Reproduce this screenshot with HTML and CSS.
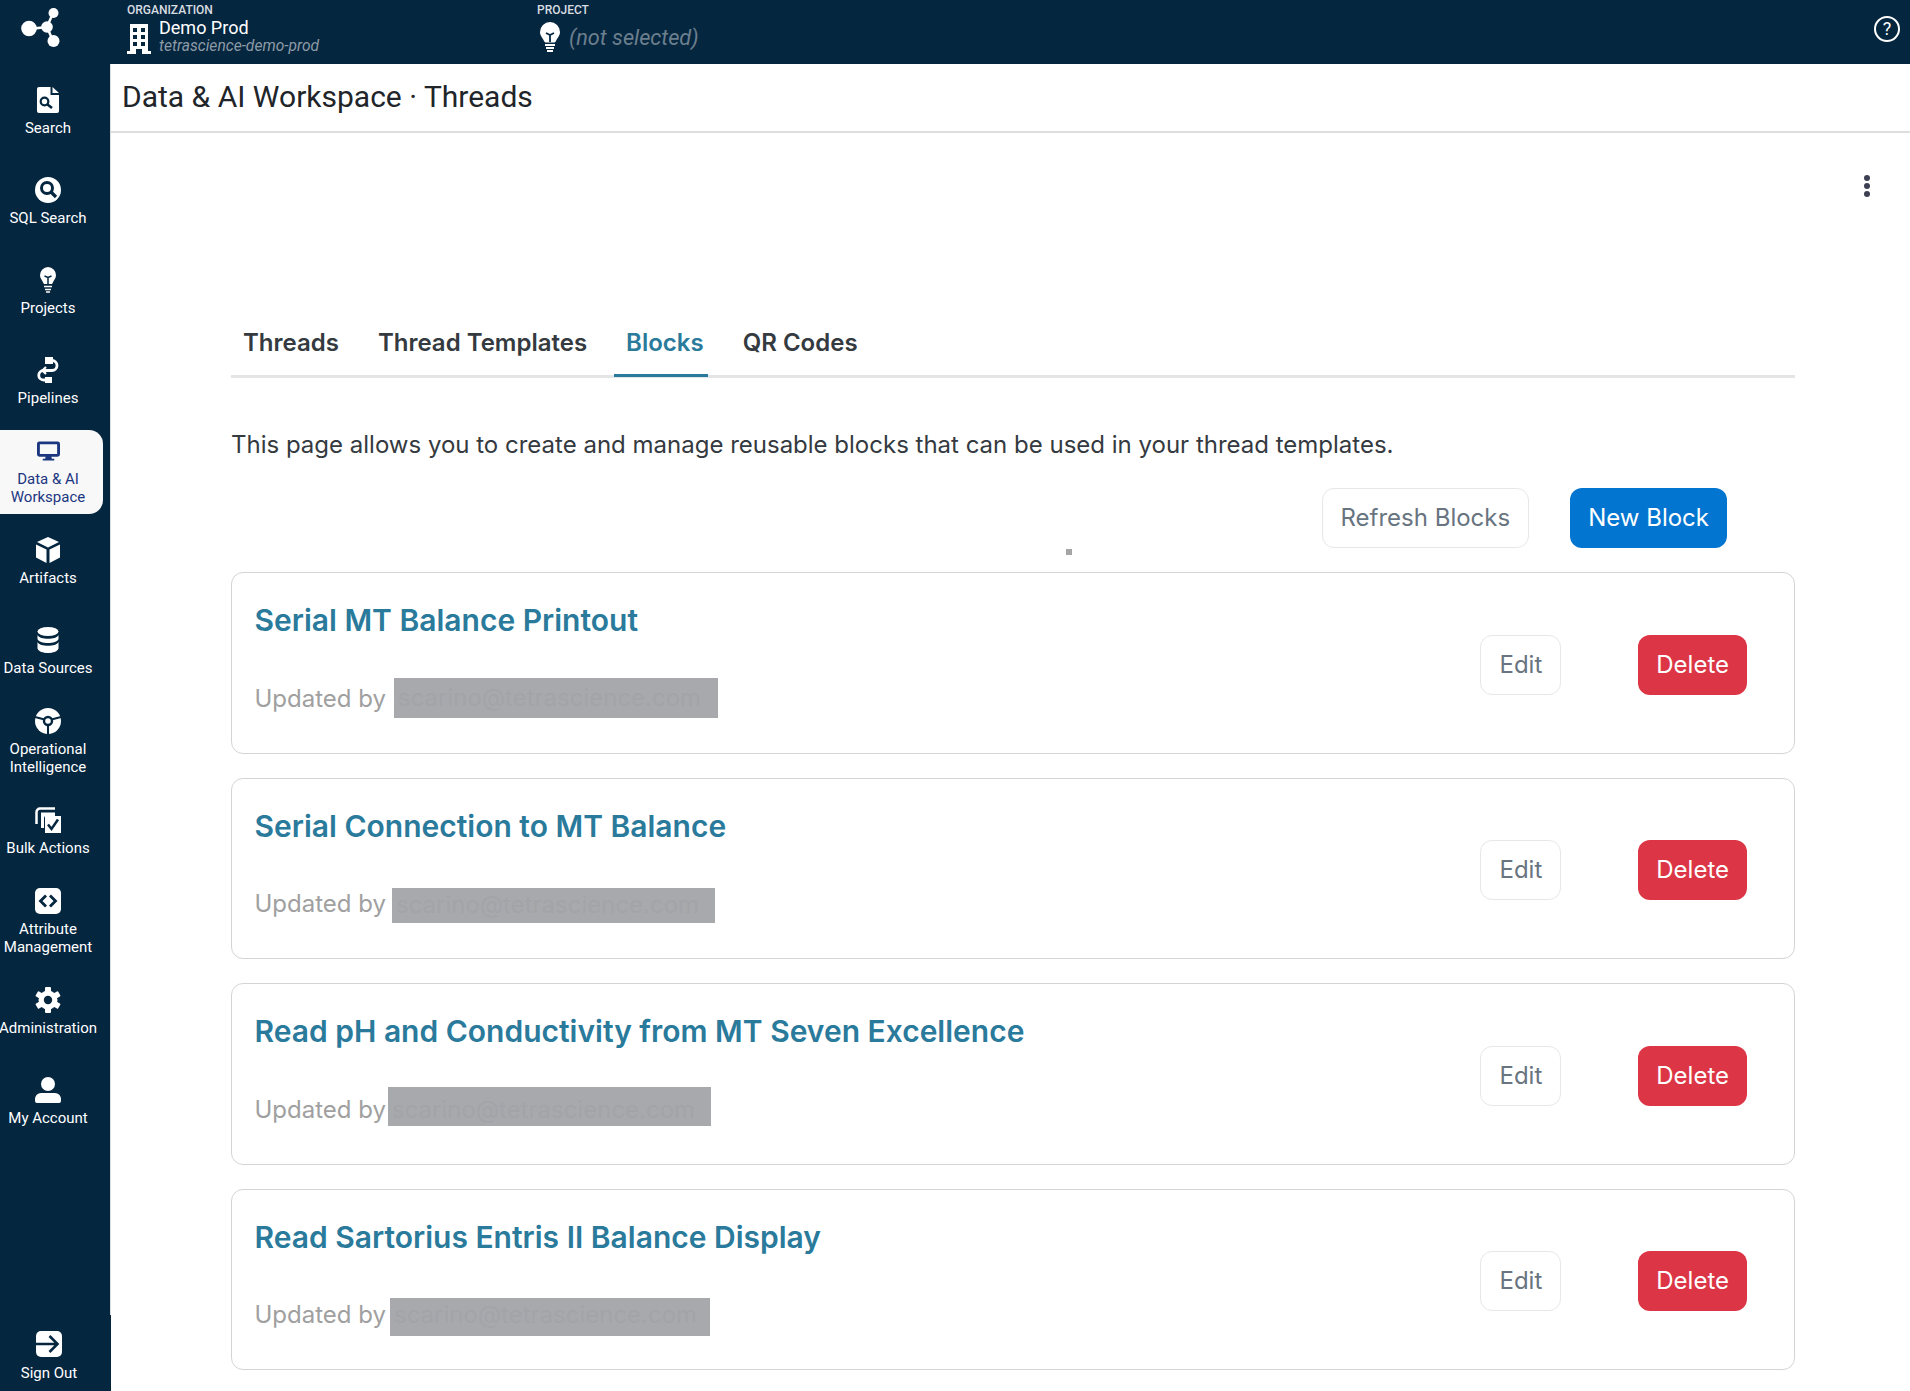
FILE: index.html
```html
<!DOCTYPE html>
<html lang="en">
<head>
<meta charset="utf-8">
<title>Data &amp; AI Workspace · Threads</title>
<link rel="stylesheet" href="styles.css">
</head>
<body>
<header class="topbar">
  <div class="logo-cell">
    <svg class="logo" viewBox="0 0 64 64"><g fill="#fff" stroke="#fff"><path d="M29 29 47 27 53 13M47 27 53 41" stroke-width="2.500" fill="none"/><circle cx="29" cy="28.500" r="7.800" stroke="none"/><circle cx="47" cy="27" r="5.800" stroke="none"/><circle cx="53.500" cy="13" r="5" stroke="none"/><circle cx="53.500" cy="41" r="6" stroke="none"/></g></svg>
  </div>
  <div class="org">
    <div class="mini-label">ORGANIZATION</div>
    <div class="org-row">
      <svg class="org-icon" viewBox="0 0 24 30"><path fill="#fff" fill-rule="evenodd" d="M3 0h18v27h3v3H15v-5H9v5H0v-3h3zM6 4v4h4V4zm8 0v4h4V4zM6 11v4h4v-4zm8 0v4h4v-4zM6 18v4h4v-4zm8 0v4h4v-4z"/></svg>
      <div>
        <div class="org-name">Demo Prod</div>
        <div class="org-slug">tetrascience-demo-prod</div>
      </div>
    </div>
  </div>
  <div class="project">
    <div class="mini-label">PROJECT</div>
    <div class="project-row">
      <svg class="project-icon" viewBox="0 0 20 30"><path fill="#fff" d="M10 0a10 10 0 0 1 10 10c0 4-3 6-4 9-.3.8-1 1.500-2 1.500H6c-1 0-1.700-.7-2-1.500-1-3-4-5-4-9A10 10 0 0 1 10 0z"/><path d="M6 11l4 2 4-2M10 13v7" stroke="#05263f" stroke-width="1.800" fill="none"/><path d="M5 23h10M6 26h8M7 29h6" stroke="#fff" stroke-width="1.800"/></svg>
      <span class="not-selected">(not selected)</span>
    </div>
  </div>
  <div class="help">?</div>
</header>

<div class="shell">
  <nav class="sidebar">
    <a class="nav-item">
      <svg class="nav-icon" viewBox="0 0 26 26"><path fill="#fff" d="M4 0h11.500v8H24v16a2 2 0 0 1-2 2H4a2 2 0 0 1-2-2V2a2 2 0 0 1 2-2zM17.500 0L24 6h-6.500z"/><circle cx="9.500" cy="14.500" r="3.800" fill="none" stroke="#05263f" stroke-width="2.200"/><path d="M12.500 17.500l4.500 3.500" stroke="#05263f" stroke-width="2.600"/></svg>
      <span>Search</span>
    </a>
    <a class="nav-item">
      <svg class="nav-icon" viewBox="0 0 26 26"><circle cx="13" cy="13" r="13" fill="#fff"/><circle cx="12" cy="11" r="5.500" fill="none" stroke="#05263f" stroke-width="3"/><path d="M16 15l5 5" stroke="#05263f" stroke-width="3.200"/></svg>
      <span>SQL Search</span>
    </a>
    <a class="nav-item">
      <svg class="nav-icon" viewBox="0 0 26 26"><path fill="#fff" d="M13 0a8.200 8.200 0 0 1 8 8.200c0 3.300-2.400 5-3.200 7.500-.3.700-.8 1.300-1.600 1.300H9.800c-.8 0-1.300-.6-1.600-1.300C7.400 13.200 5 11.500 5 8.200A8.200 8.200 0 0 1 13 0z"/><path d="M9.500 9l3.500 1.500L16.500 9M13 10.500V17" stroke="#05263f" stroke-width="1.500" fill="none"/><path d="M9 19.500h8M10 22.500h6M11 25h4" stroke="#fff" stroke-width="1.600"/></svg>
      <span>Projects</span>
    </a>
    <a class="nav-item">
      <svg class="nav-icon" viewBox="0 0 26 26"><path fill="#fff" d="M10 0h8v7h-8zM10 20h7v6h-7z"/><path d="M16 3.500h1a5 5 0 0 1 0 10H8.500a4.700 4.700 0 0 0 0 9.500H12" fill="none" stroke="#fff" stroke-width="2.800"/><path d="M11 10l-3.500 3.500L11 17" fill="none" stroke="#fff" stroke-width="2.200"/></svg>
      <span>Pipelines</span>
    </a>
    <a class="nav-item active">
      <div class="pill">
        <svg class="nav-icon small" viewBox="0 0 24 20"><path fill="#1c3680" fill-rule="evenodd" d="M2.500 0h19A2.500 2.500 0 0 1 24 2.500v11a2.500 2.500 0 0 1-2.500 2.500H15l.5 2H18v2H6v-2h2.500l.5-2H2.500A2.500 2.500 0 0 1 0 13.500v-11A2.500 2.500 0 0 1 2.500 0zM3 3v10h18V3z"/></svg>
        <span>Data &amp; AI<br>Workspace</span>
      </div>
    </a>
    <a class="nav-item">
      <svg class="nav-icon" viewBox="0 0 26 26"><path fill="#fff" d="M13 0l11 5-11 5.500L2 5zM1 7.500l10.500 5V26L1 20.500zM25 7.500l-10.500 5V26L25 20.500z"/></svg>
      <span>Artifacts</span>
    </a>
    <a class="nav-item">
      <svg class="nav-icon" viewBox="0 0 26 26"><g fill="#fff"><ellipse cx="13" cy="4.500" rx="10.500" ry="4.500"/><path d="M2.500 8c1.500 2.800 5.500 3.800 10.500 3.800S22 10.800 23.500 8v4c-1 2.800-5.500 4-10.500 4S3.500 14.800 2.500 12z"/><path d="M2.500 15c1.500 2.800 5.500 3.800 10.500 3.800S22 17.800 23.500 15v6.500c-1 3-5.500 4.500-10.500 4.500S3.500 24.500 2.500 21.500z"/></g></svg>
      <span>Data Sources</span>
    </a>
    <a class="nav-item">
      <svg class="nav-icon" viewBox="0 0 26 26"><circle cx="13" cy="13" r="13" fill="#fff"/><circle cx="13" cy="13" r="4" fill="none" stroke="#05263f" stroke-width="2.400"/><path d="M9.500 11.500L0 9M16.500 11.500L26 9M13 17v9" stroke="#05263f" stroke-width="2"/></svg>
      <span>Operational<br>Intelligence</span>
    </a>
    <a class="nav-item">
      <svg class="nav-icon" viewBox="0 0 26 26"><path d="M20 1.500H5A3.500 3.500 0 0 0 1.500 5v12" fill="none" stroke="#fff" stroke-width="2.500"/><path d="M6 5.500h14V9H11a2 2 0 0 0-2 2v10H6z" fill="#fff"/><rect x="10" y="9" width="16" height="17" fill="#fff"/><path d="M13 17.500l3.500 4.500 6.500-9.500" fill="none" stroke="#05263f" stroke-width="2.500"/></svg>
      <span>Bulk Actions</span>
    </a>
    <a class="nav-item">
      <svg class="nav-icon" viewBox="0 0 26 26"><rect width="26" height="26" rx="5" fill="#fff"/><path d="M11 7.500L5.500 13l5.500 5.500M15 7.500l5.500 5.500-5.500 5.500" fill="none" stroke="#05263f" stroke-width="2.800"/></svg>
      <span>Attribute<br>Management</span>
    </a>
    <a class="nav-item">
      <svg class="nav-icon" viewBox="0 0 26 26"><g fill="#fff"><rect x="10" y="0" width="6" height="26" rx="1"/><rect x="10" y="0" width="6" height="26" rx="1" transform="rotate(60 13 13)"/><rect x="10" y="0" width="6" height="26" rx="1" transform="rotate(120 13 13)"/></g><circle cx="13" cy="13" r="7.500" fill="none" stroke="#fff" stroke-width="4"/><circle cx="13" cy="13" r="4.200" fill="#05263f"/></svg>
      <span>Administration</span>
    </a>
    <a class="nav-item">
      <svg class="nav-icon" viewBox="0 0 26 26"><circle cx="13" cy="7" r="7" fill="#fff"/><path fill="#fff" d="M6 16h14a6 6 0 0 1 6 6v2a2 2 0 0 1-2 2H2a2 2 0 0 1-2-2v-2a6 6 0 0 1 6-6z"/></svg>
      <span>My Account</span>
    </a>
    <a class="nav-item signout">
      <svg class="nav-icon" viewBox="0 0 26 26"><rect width="26" height="26" rx="5" fill="#fff"/><path d="M0 13h21M13.500 5l8 8-8 8" fill="none" stroke="#05263f" stroke-width="2.600"/></svg>
      <span>Sign Out</span>
    </a>
  </nav>

  <main class="main">
    <h1 class="page-title">Data &amp; AI Workspace · Threads</h1>
    <div class="content">
      <div class="kebab-row">
        <div class="kebab"><i></i><i></i><i></i></div>
      </div>
      <div class="tabs">
        <a class="tab">Threads</a>
        <a class="tab">Thread Templates</a>
        <a class="tab on">Blocks</a>
        <a class="tab">QR Codes</a>
      </div>
      <p class="intro">This page allows you to create and manage reusable blocks that can be used in your thread templates.</p>
      <div class="toolbar">
        <button class="btn outline">Refresh Blocks</button>
        <button class="btn primary">New Block</button>
      </div>
      <div class="speck-row"><span class="speck"></span></div>
      <div class="cards">
        <article class="card">
          <div class="card-text">
            <h2 class="card-title">Serial MT Balance Printout</h2>
            <div class="updated"><span>Updated by</span><span class="redact r1">scarino@tetrascience.com</span></div>
          </div>
          <div class="actions"><button class="btn outline">Edit</button><button class="btn danger">Delete</button></div>
        </article>
        <article class="card">
          <div class="card-text">
            <h2 class="card-title">Serial Connection to MT Balance</h2>
            <div class="updated"><span>Updated by</span><span class="redact r2">scarino@tetrascience.com</span></div>
          </div>
          <div class="actions"><button class="btn outline">Edit</button><button class="btn danger">Delete</button></div>
        </article>
        <article class="card">
          <div class="card-text">
            <h2 class="card-title">Read pH and Conductivity from MT Seven Excellence</h2>
            <div class="updated"><span>Updated by</span><span class="redact r3">scarino@tetrascience.com</span></div>
          </div>
          <div class="actions"><button class="btn outline">Edit</button><button class="btn danger">Delete</button></div>
        </article>
        <article class="card">
          <div class="card-text">
            <h2 class="card-title">Read Sartorius Entris II Balance Display</h2>
            <div class="updated"><span>Updated by</span><span class="redact r4">scarino@tetrascience.com</span></div>
          </div>
          <div class="actions"><button class="btn outline">Edit</button><button class="btn danger">Delete</button></div>
        </article>
      </div>
    </div>
  </main>
</div>
</body>
</html>
```

FILE: styles.css
```css
* { box-sizing: border-box; }
html, body { margin: 0; height: 100%; overflow: hidden; background: #fff; }
body { font-family: Inter, "Liberation Sans", sans-serif; width: 1910px; height: 1391px; }

.topbar { height: 64px; background: #05263f; display: flex; color: #fff; font-family: Roboto, sans-serif; position: relative; }
.logo-cell { width: 110px; flex: none; }
.logo { width: 64px; height: 64px; display: block; }
.org { width: 410px; flex: none; padding: 3px 0 0 17px; }
.project { padding-top: 3px; margin-left: 17px; }
.mini-label { font-size: 12px; font-weight: 500; line-height: 15px; color: #d9dde1; }
.org-row { display: flex; gap: 8px; }
.org-icon { width: 24px; height: 30px; margin-top: 6px; flex: none; }
.org-name { font-size: 18px; line-height: 20px; }
.org-slug { font-size: 15.600px; line-height: 16px; font-style: italic; color: #8d9ba7; }
.project-row { display: flex; align-items: center; gap: 9px; margin-top: 4px; }
.project-icon { width: 20px; height: 30px; margin-left: 3px; }
.not-selected { font-size: 21.700px; font-style: italic; color: #6c7f8e; }
.help { margin-left: auto; margin-right: 10px; margin-top: 16px; width: 26px; height: 26px; border: 2px solid #fff; border-radius: 50%; font-size: 18px; line-height: 22px; text-align: center; }

.shell { display: flex; height: 1327px; }
.sidebar { width: 111px; flex: none; background: #05263f; border-right: 1px solid #dcdcdc; padding-top: 3px; display: flex; flex-direction: column; font-family: Roboto, sans-serif; font-size: 15px; line-height: 18px; color: #fff; text-align: center; }
.nav-item { height: 90px; flex: none; width: 96px; display: flex; flex-direction: column; align-items: center; justify-content: center; gap: 6px; color: #fff; }
.nav-icon { width: 26px; height: 26px; display: block; flex: none; }
.nav-icon.small { width: 23px; height: 20px; }
.active { justify-content: flex-start; align-items: flex-start; }
.pill { width: 103px; height: 84px; margin-top: 3px; padding: 11px 7px 0 0; background: #f8f8f9; color: #1c3680; border-radius: 0 14px 14px 0; display: flex; flex-direction: column; align-items: center; gap: 9px; flex: none; }
.signout { margin-top: auto; width: 111px; height: 76px; background: #05263f; justify-content: flex-start; gap: 7px; padding: 16px 13px 0 0; margin-right: -1px; }

.main { flex: 1; min-width: 0; }
.page-title { margin: 0; height: 69px; border-bottom: 2px solid #dedede; font-family: Roboto, sans-serif; font-weight: 400; font-size: 30px; line-height: 65px; padding-left: 11px; color: #212529; }
.content { padding: 0 115px 0 120px; }
.kebab-row { height: 185px; display: flex; justify-content: flex-end; padding: 42px 0 0; }
.kebab { margin-right: -75px; width: 6px; display: flex; flex-direction: column; gap: 2px; }
.kebab i { width: 6px; height: 6px; border-radius: 50%; background: #3c4052; display: block; }

.tabs { display: flex; gap: 23px; border-bottom: 3px solid #e3e5e6; height: 60px; }
.tab { padding: 0 4px 0 12px; font-size: 24px; font-weight: 600; line-height: 50px; color: #343a40; height: 60px; }
.tab.on { color: #2a7a9c; border-bottom: 3px solid #2a7a9c; height: 59px; }
.intro { margin: 0; font-size: 24px; line-height: 36px; padding-top: 49px; height: 110px; color: #343a40; }
.toolbar { display: flex; justify-content: flex-end; gap: 41px; padding-right: 68px; }
.btn { font-family: Inter, sans-serif; font-size: 24px; height: 60px; padding: 0 17px; border-radius: 12px; border: 1px solid transparent; line-height: 1; }
.outline { background: #fff; color: #68747f; border-color: #e5e7eb; padding: 0 18px; }
.primary { background: #0275d0; color: #fff; }
.danger { background: #dc3545; color: #fff; }
.speck-row { height: 23px; padding: 0 0 0 835px; }
.speck { display: block; width: 6px; height: 6px; background: #a5a5a5; margin-top: 1px; }

.cards { display: flex; flex-direction: column; gap: 24px; }
.card { height: 181.500px; border: 1px solid #d4d4d4; border-radius: 12px; display: flex; justify-content: space-between; align-items: center; padding: 0 47px 0 22.500px; }
.card-text { align-self: stretch; padding-top: 27px; }
.card-title { margin: 0; font-size: 30px; line-height: 40px; font-weight: 600; color: #2a7a9c; }
.updated { display: flex; align-items: center; height: 40px; margin-top: 38px; font-size: 24px; color: #a0a0a0; gap: 8px; }
.redact { display: block; background: #a8a9ad; color: #a3a4a8; line-height: 1; padding: 8px 0 0 4px; white-space: nowrap; overflow: hidden; }
.r1 { width: 324px; height: 40px; }
.r2 { width: 323px; height: 35px; margin-left: -2px; margin-top: 3px; padding-top: 5px; }
.r3 { width: 323px; height: 39px; margin-left: -6px; margin-top: -6px; padding-top: 11px; }
.r4 { width: 320px; height: 38px; margin-left: -4px; margin-top: 4px; padding-top: 5px; }
.actions { display: flex; gap: 77px; margin-top: 4px; }
```
